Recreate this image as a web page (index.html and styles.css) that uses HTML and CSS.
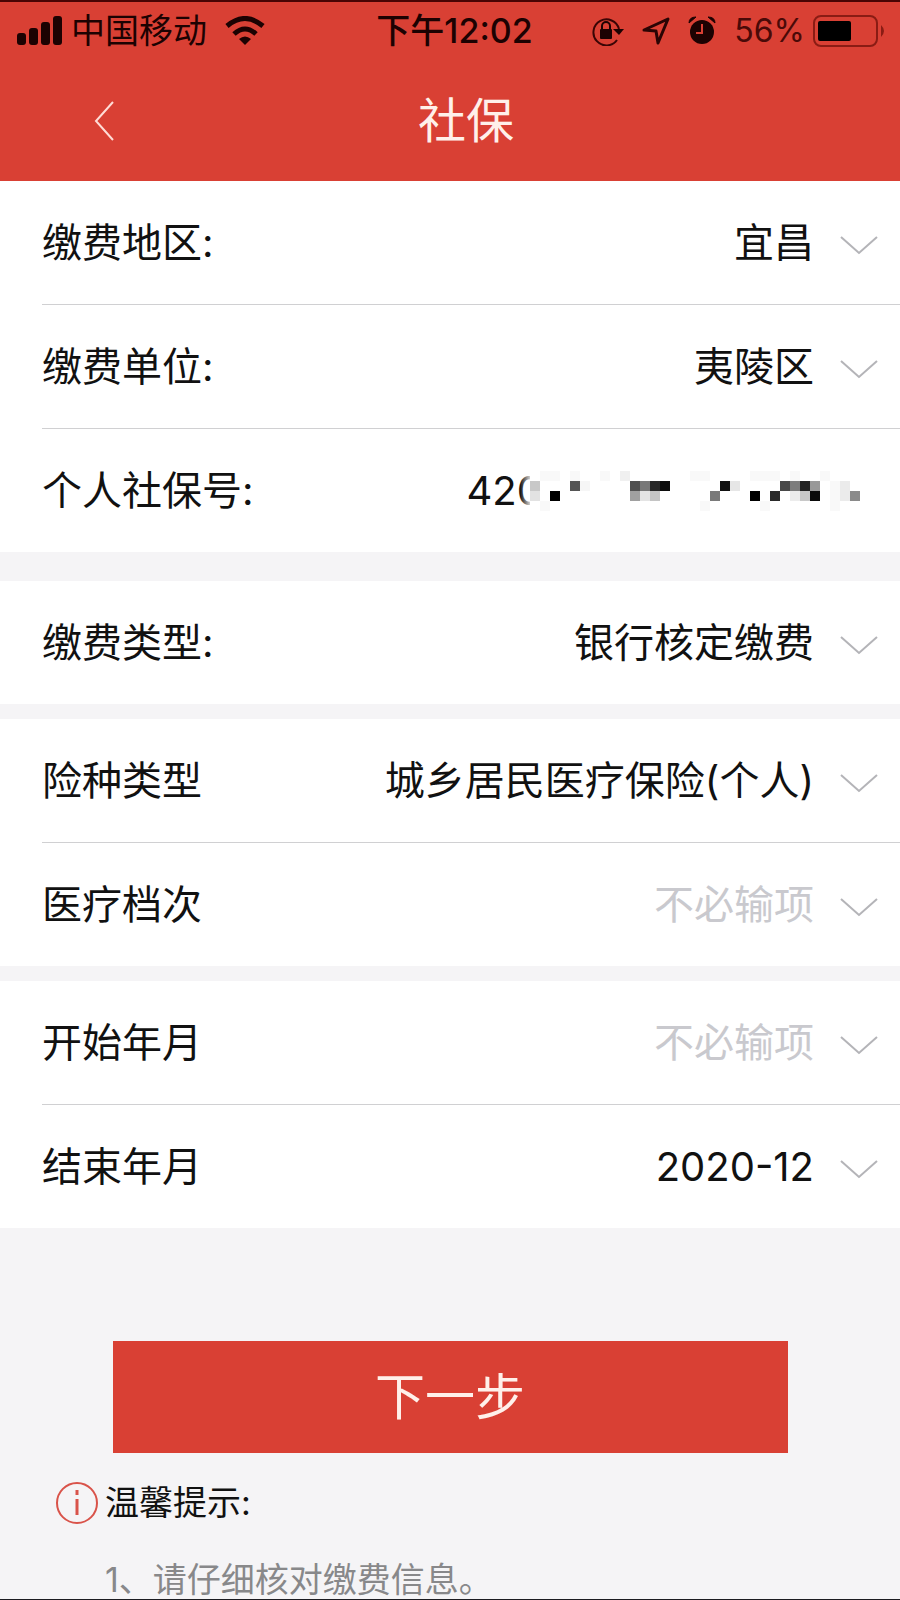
FILE: index.html
```html
<!DOCTYPE html>
<html lang="zh-CN">
<head>
    <meta charset="UTF-8">
    <meta name="viewport" content="width=device-width, initial-scale=1.0">
    <title>社保</title>
    <link rel="stylesheet" href="styles.css">
</head>
<body>
    <svg class="symbols" aria-hidden="true">
        <symbol id="chevron" viewBox="0 0 38 20">
            <path d="M1 2 L19 18 L37 2" fill="none" stroke="#b4b4b8" stroke-width="2"/>
        </symbol>
    </svg>

    <header class="header">
        <div class="status-bar">
            <div class="status-left">
                <svg class="signal" width="46" height="30" viewBox="0 0 46 30">
                    <rect x="0" y="17" width="9" height="12" rx="3"/>
                    <rect x="12" y="12" width="9" height="17" rx="3"/>
                    <rect x="24" y="6" width="9" height="23" rx="3"/>
                    <rect x="36" y="0" width="9" height="29" rx="3"/>
                </svg>
                <span class="carrier">中国移动</span>
                <svg class="wifi" width="40" height="30" viewBox="0 0 40 30">
                    <path d="M2 10 Q20 -5 38 10" fill="none" stroke="#1c0202" stroke-width="5"/>
                    <path d="M9 18 Q20 8 31 18" fill="none" stroke="#1c0202" stroke-width="5"/>
                    <path d="M14 23 Q20 18 26 23 L20 29 Z"/>
                </svg>
            </div>
            <div class="status-time">下午12:02</div>
            <div class="status-right">
                <svg width="32" height="30" viewBox="0 0 32 30">
                    <path d="M25 24 A13 13 0 1 1 27 13" fill="none" stroke="#3a0505" stroke-width="2"/>
                    <path d="M21 13 H32 L27 19 Z"/>
                    <rect x="8" y="13" width="12" height="10" rx="1"/>
                    <path d="M10 13 V10 A4 4 0 0 1 18 10 V13" fill="none" stroke="#1c0202" stroke-width="2"/>
                </svg>
                <svg width="28" height="30" viewBox="0 0 28 30">
                    <path d="M2 14 L26 3 L16 27 L14 15 Z" fill="none" stroke="#2a0404" stroke-width="3" stroke-linejoin="round"/>
                </svg>
                <svg width="28" height="30" viewBox="0 0 28 30">
                    <circle cx="14" cy="16" r="12"/>
                    <path d="M1 7 Q1 1 8 1 Z M27 7 Q27 1 20 1 Z" stroke="#1c0202" stroke-width="1"/>
                    <path d="M14 8 V17 H8" fill="none" stroke="#d94034" stroke-width="2"/>
                </svg>
                <span class="percent">56%</span>
                <svg width="74" height="32" viewBox="0 0 74 32">
                    <rect x="2" y="1" width="63" height="30" rx="7" fill="none" stroke="#8a1c14" stroke-width="2"/>
                    <rect x="6" y="6" width="33" height="20" rx="2" fill="#000"/>
                    <path d="M69 10 Q75 16 69 22 Z" fill="#8a1c14"/>
                </svg>
            </div>
        </div>
        <div class="title-bar">
            <button class="back-button" aria-label="返回">
                <svg width="20" height="40" viewBox="0 0 20 40">
                    <path d="M19 1 L2 20 L19 39" fill="none" stroke="#ffdcd6" stroke-width="2"/>
                </svg>
            </button>
            <h1 class="title">社保</h1>
        </div>
    </header>

    <form class="form">
        <div class="group">
            <div class="row">
                <label for="area">缴费地区:</label>
                <select id="area"><option>宜昌</option></select>
                <svg class="chevron"><use href="#chevron"/></svg>
            </div>
            <div class="row">
                <label for="unit">缴费单位:</label>
                <select id="unit"><option>夷陵区</option></select>
                <svg class="chevron"><use href="#chevron"/></svg>
            </div>
            <div class="row">
                <label for="number">个人社保号:</label>
                <input id="number" type="text" value="420">
                <!-- masked part of the number -->
                <svg class="mask" width="340" height="40" viewBox="0 0 340 40">
                    <defs>
                        <linearGradient id="fade">
                            <stop offset="0" stop-color="#fff" stop-opacity="0"/>
                            <stop offset="1" stop-color="#fff" stop-opacity="0.8"/>
                        </linearGradient>
                    </defs>
                    <rect width="10" height="40" fill="url(#fade)"/>
                    <rect x="10" width="330" height="40" fill="#fff"/>
                    <g fill="#f9f9f9">
                        <path d="M20 0h20v10h-20z M50 0h10v10h-10z M80 0h10v10h-10z M110 10h10v10h-10z M170 0h20v10h-20z M230 0h30v10h-30z M270 0h10v10h-10z M300 0h10v10h-10z"/>
                        <path d="M20 30h10v10h-10z M180 30h10v10h-10z M240 30h10v10h-10z M310 30h10v10h-10z M310 10h10v20h-10z"/>
                    </g>
                    <rect x="100" y="0" width="10" height="10" fill="#f0f0f0"/>
                    <rect x="10" y="10" width="10" height="10" fill="#c8c8c8"/>
                    <rect x="50" y="10" width="10" height="10" fill="#555"/>
                    <rect x="60" y="10" width="10" height="10" fill="#f6f6f6"/>
                    <rect x="110" y="10" width="10" height="10" fill="#505050"/>
                    <rect x="120" y="10" width="10" height="10" fill="#787878"/>
                    <rect x="130" y="10" width="10" height="10" fill="#282828"/>
                    <rect x="140" y="10" width="10" height="10" fill="#0c0c0c"/>
                    <rect x="200" y="10" width="10" height="10" fill="#111"/>
                    <rect x="210" y="10" width="10" height="10" fill="#e6e6e6"/>
                    <rect x="260" y="10" width="10" height="10" fill="#484848"/>
                    <rect x="270" y="10" width="10" height="10" fill="#7d7d7d"/>
                    <rect x="280" y="10" width="10" height="10" fill="#222"/>
                    <rect x="290" y="10" width="10" height="10" fill="#999"/>
                    <rect x="320" y="10" width="10" height="20" fill="#ebebeb"/>
                    <rect x="10" y="20" width="10" height="10" fill="#e2e2e2"/>
                    <rect x="30" y="20" width="10" height="10" fill="#000"/>
                    <rect x="110" y="20" width="10" height="10" fill="#a0a0a0"/>
                    <rect x="120" y="20" width="10" height="10" fill="#e4e4e4"/>
                    <rect x="130" y="20" width="10" height="10" fill="#c4c4c4"/>
                    <rect x="190" y="20" width="10" height="10" fill="#7a7a7a"/>
                    <rect x="230" y="20" width="10" height="10" fill="#000"/>
                    <rect x="250" y="20" width="10" height="10" fill="#2a2a2a"/>
                    <rect x="270" y="20" width="10" height="10" fill="#ececec"/>
                    <rect x="280" y="20" width="10" height="10" fill="#c8c8c8"/>
                    <rect x="290" y="20" width="10" height="10" fill="#0a0a0a"/>
                    <rect x="330" y="20" width="10" height="10" fill="#8a8a8a"/>
                </svg>
            </div>
        </div>

        <div class="group group-spaced">
            <div class="row">
                <label for="payType">缴费类型:</label>
                <select id="payType"><option>银行核定缴费</option></select>
                <svg class="chevron"><use href="#chevron"/></svg>
            </div>
        </div>

        <div class="group">
            <div class="row">
                <label for="insurance">险种类型</label>
                <select id="insurance"><option>城乡居民医疗保险(个人)</option></select>
                <svg class="chevron"><use href="#chevron"/></svg>
            </div>
            <div class="row">
                <label for="level">医疗档次</label>
                <select id="level" class="empty"><option>不必输项</option></select>
                <svg class="chevron"><use href="#chevron"/></svg>
            </div>
        </div>

        <div class="group">
            <div class="row">
                <label for="start">开始年月</label>
                <select id="start" class="empty"><option>不必输项</option></select>
                <svg class="chevron"><use href="#chevron"/></svg>
            </div>
            <div class="row">
                <label for="end">结束年月</label>
                <select id="end"><option>2020-12</option></select>
                <svg class="chevron"><use href="#chevron"/></svg>
            </div>
        </div>

        <button class="next-button" type="button">下一步</button>
    </form>

    <section class="tips">
        <h2 class="tips-title">
            <svg width="44" height="44" viewBox="0 0 44 44">
                <circle cx="22" cy="22" r="20" fill="none" stroke="#d9534a" stroke-width="2"/>
                <path d="M22 9 V14 M22 18 V34" stroke="#d9534a" stroke-width="3"/>
            </svg>
            温馨提示:
        </h2>
        <p class="tips-text">1、请仔细核对缴费信息。</p>
    </section>
</body>
</html>
```

FILE: styles.css
```css
* {
    box-sizing: border-box;
}

body {
    display: flex;
    flex-direction: column;
    min-height: 100vh;
    margin: 0;
    background-color: #f5f4f6;
    border-bottom: 2px solid #1b1b20;
    color: #111;
    font-family: Inter, "Noto Sans CJK SC", sans-serif;
}

.symbols {
    position: absolute;
    width: 0;
    height: 0;
}

.header {
    background-color: #d94034;
    border-top: 2px solid #4a0404;
}

.status-bar {
    display: grid;
    grid-template-columns: 1fr auto 1fr;
    align-items: center;
    height: 58px;
    padding: 0 14px 0 17px;
    color: #1c0202;
    fill: #1c0202;
}

.status-left,
.status-right {
    display: flex;
    align-items: center;
}

.status-left {
    gap: 8px;
}

.wifi {
    margin-left: 10px;
}

.carrier {
    font-size: 34px;
    line-height: 40px;
}

.status-time {
    padding-left: 6px;
    font-size: 34px;
    font-weight: 500;
    line-height: 40px;
}

.status-right {
    justify-content: flex-end;
    gap: 18px;
}

.percent {
    margin-right: -11px;
    color: #4a0a08;
    font-size: 32px;
    line-height: 40px;
}

.title-bar {
    display: grid;
    grid-template-columns: 1fr auto 1fr;
    align-items: center;
    height: 121px;
    padding-left: 32px;
}

.back-button {
    display: flex;
    justify-self: start;
    margin-left: 52px;
    padding: 10px;
    border: none;
    background: none;
    cursor: pointer;
}

.title {
    margin: 0;
    color: #fff0ea;
    font-size: 48px;
    font-weight: 400;
    line-height: 60px;
}

.form {
    display: flex;
    flex-direction: column;
}

.group {
    margin-bottom: 15px;
    padding-left: 42px;
    background-color: #fff;
}

.group-spaced {
    margin-top: 14px;
}

.row {
    display: flex;
    align-items: center;
    height: 123px;
    padding-right: 22px;
    font-size: 40px;
    line-height: 56px;
}

.row + .row {
    height: 124px;
    border-top: 1px solid #d0d0d2;
}

.row select,
.row input {
    flex: 1;
    min-width: 0;
    height: 56px;
    padding: 0;
    border: none;
    outline: none;
    background: none;
    appearance: none;
    color: #111;
    font: inherit;
    text-align: right;
    text-align-last: right;
}

.row select.empty {
    color: #c9c9ce;
}

.chevron {
    width: 38px;
    height: 20px;
    margin-top: 4px;
    margin-left: 26px;
}

.mask {
    position: relative;
    margin-right: 18px;
    margin-left: -22px;
}

.next-button {
    align-self: center;
    width: 75%;
    height: 112px;
    margin-top: 98px;
    padding: 0 0 8px;
    border: none;
    background-color: #d94034;
    color: #fff0ea;
    font-family: inherit;
    font-size: 50px;
    cursor: pointer;
}

.tips {
    padding: 28px 55px 0;
}

.tips-title {
    display: flex;
    align-items: center;
    gap: 6px;
    margin: 0;
    font-size: 34px;
    font-weight: 400;
    line-height: 44px;
}

.tips-text {
    margin: 36px 0 0 50px;
    color: #88888a;
    font-size: 34px;
    line-height: 38px;
}
```
